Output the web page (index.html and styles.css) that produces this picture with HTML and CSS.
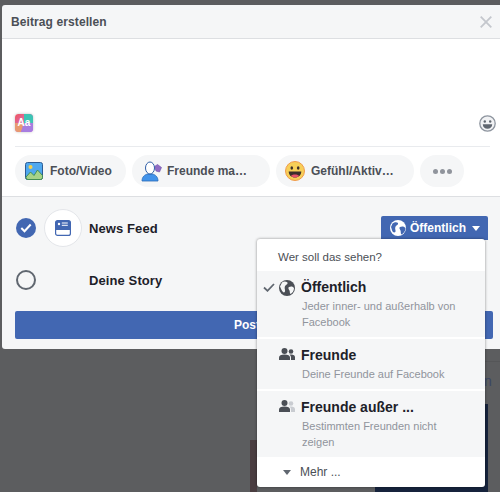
FILE: index.html
```html
<!DOCTYPE html>
<html>
<head>
<title>Beitrag erstellen</title>
<meta http-equiv="Content-Type" content="text/html; charset=utf-8" />
<link rel="stylesheet" href="styles.css">
</head>
<body>
<div class="behind behind-n">n</div>
<div class="behind behind-line"></div>
<div class="behind behind-pic"></div>
<div class="behind behind-left"></div>

<div class="dialog">
	<div class="head">
		<span class="title">Beitrag erstellen</span>
		<svg class="close" width="12" height="12" viewBox="0 0 12 12"><path d="M.7.7l10.6 10.6M11.3.7L.7 11.3" stroke="#c4c7cd" stroke-width="1.8" fill="none"/></svg>
	</div>
	<div class="compose">
		<div class="editor">
			<span class="aa">
				<svg width="18" height="18" viewBox="0 0 18 18">
					<defs>
						<linearGradient id="aa1" x1="0" y1="0" x2="1" y2="1">
							<stop offset="0" stop-color="#f0555f"/>
							<stop offset=".5" stop-color="#d86fb0"/>
							<stop offset="1" stop-color="#b33be8"/>
						</linearGradient>
					</defs>
					<rect width="18" height="18" rx="3.5" fill="url(#aa1)"/>
					<path d="M9 0h5.5A3.5 3.5 0 0 1 18 3.5V9L9 9z" fill="#3cc4b4"/>
					<path d="M0 9l9 0-3 9H3.500A3.500 3.500 0 0 1 0 14.500z" fill="#e89a70"/>
					<path d="M9 9l9 0v5.500A3.500 3.500 0 0 1 14.500 18H6z" fill="#a77de0"/>
				</svg>
				<span class="aa-text">Aa</span>
			</span>
			<svg class="smile" width="17" height="17" viewBox="0 0 17 17">
				<circle cx="8.500" cy="8.500" r="7.700" fill="#f1f2f4" stroke="#8d949e" stroke-width="1.300"/>
				<circle cx="5.800" cy="6.500" r="1.200" fill="#606770"/>
				<circle cx="11.200" cy="6.500" r="1.200" fill="#606770"/>
				<path d="M3.800 9.300h9.400c0 2.800-2 4.500-4.700 4.500s-4.700-1.700-4.700-4.500z" fill="#606770"/>
			</svg>
		</div>
		<div class="pills">
			<a class="pill pill-photo">
				<svg width="18" height="18" viewBox="0 0 18 18">
					<rect x=".5" y=".5" width="17" height="17" rx="2" fill="#4fa8ee" stroke="#2c5c94"/>
					<circle cx="5.500" cy="5" r="2" fill="#f7d04a"/>
					<path d="M1 15l4.500-5 3.500 3.500 3.500-5.500 5 5.500V15.500a2 2 0 0 1-2 2H3a2 2 0 0 1-2-2z" fill="#a6d388" stroke="#3d8b4a" stroke-width=".9"/>
				</svg>
				<span class="pill-text">Foto/Video</span>
			</a>
			<a class="pill pill-tag">
				<svg width="21" height="21" viewBox="0 0 21 21">
					<path d="M13.500 5.500l3-2 4 3-2 4.500-3.500-1z" fill="#8f6cc4" stroke="#6d4fa8" stroke-width=".6"/>
					<path d="M1 20c0-4 2.500-6.500 6-7h4c3.500.5 6 3 6 7z" fill="#4293ea" stroke="#2a6bb8" stroke-width=".8"/>
					<ellipse cx="9" cy="7" rx="4.500" ry="6" fill="#fff" stroke="#2f5fa8" stroke-width="1"/>
				</svg>
				<span class="pill-text">Freunde markieren</span>
			</a>
			<a class="pill pill-feel">
				<svg width="20" height="20" viewBox="0 0 20 20">
					<circle cx="10" cy="10" r="9.500" fill="#f7cf58" stroke="#f09a4a"/>
					<ellipse cx="6.800" cy="7" rx="1.300" ry="1.700" fill="#3c2f2a"/>
					<ellipse cx="13.200" cy="7" rx="1.300" ry="1.700" fill="#3c2f2a"/>
					<path d="M3.700 10.500h12.600c0 3.700-2.800 6-6.300 6s-6.300-2.300-6.300-6z" fill="#3c2f2a"/>
					<path d="M6 14.700c1-.9 2.500-1.200 4-1.200s3 .3 4 1.200c-1 1.200-2.400 1.800-4 1.800s-3-.6-4-1.800z" fill="#e8536a"/>
				</svg>
				<span class="pill-text">Gefühl/Aktivität</span>
			</a>
			<a class="pill pill-more">
				<span class="dot"></span><span class="dot"></span><span class="dot"></span>
			</a>
		</div>
	</div>
	<div class="share">
		<div class="row">
			<span class="radio radio-on">
				<svg width="12" height="10" viewBox="0 0 12 10"><path d="M1.300 5l3.200 3.200 6.200-6.700" stroke="#fff" stroke-width="2" fill="none"/></svg>
			</span>
			<span class="avatar">
				<svg width="16" height="16" viewBox="0 0 16 16">
					<rect x=".6" y=".6" width="14.800" height="14.800" rx="2" fill="#fff" stroke="#4267b2" stroke-width="1.200"/>
					<path d="M.6 10V2.600a2 2 0 0 1 2-2h10.800a2 2 0 0 1 2 2V10z" fill="#4267b2"/>
					<circle cx="4" cy="4" r="1.200" fill="#fff"/>
					<path d="M6.800 3h6M6.800 5.300h6" stroke="#fff" stroke-width="1"/>
				</svg>
			</span>
			<span class="row-label">News Feed</span>
			<a class="audience">
				<svg width="16" height="16" viewBox="0 0 16 16">
					<circle cx="8" cy="8" r="8" fill="#fff"/>
					<path d="M2.500 3.500C5 1.500 7 2 8 3c.5 1.500-1 2-2 3S5 8.500 5.500 10.500 4 13 3 12 1.500 8 1 7zM10 7c2-1 4.500-.5 5.500 1 0 3-2 5.500-4 6.500-1-1-.5-2.500-1-4S8.500 8 10 7z" fill="#4267b2"/>
				</svg>
				<span class="audience-text">Öffentlich</span>
				<span class="arrow arrow-white"></span>
			</a>
		</div>
		<div class="row row-story">
			<span class="radio"></span>
			<span class="avatar avatar-empty"></span>
			<span class="row-label">Deine Story</span>
		</div>
		<a class="post">Posten</a>
	</div>
</div>

<div class="menu">
	<div class="menu-head">Wer soll das sehen?</div>
	<div class="option option-public">
		<svg class="tick" width="12" height="9" viewBox="0 0 12 9"><path d="M1 4.500l3.500 3.300L11 1" stroke="#606770" stroke-width="1.800" fill="none"/></svg>
		<svg class="opt-icon" width="16" height="16" viewBox="0 0 16 16">
			<circle cx="8" cy="8" r="8" fill="#4b4f56"/>
			<path d="M3 2.500C5 1 7 1.500 8.500 2.500c.5 1.500-1 2-2 3S5.500 8 6 10s-1 3-2 2S1.500 8 1 6.500zM10 7c2-1 4.200-.5 5 1 0 3-1.500 5-3.500 6-1-1-.5-2.500-1-3.500S8.500 8 10 7z" fill="#f5f6f7"/>
		</svg>
		<div class="opt-title">Öffentlich</div>
		<div class="opt-desc">Jeder inner- und außerhalb von Facebook</div>
	</div>
	<div class="option">
		<svg class="opt-icon" width="16" height="12" viewBox="0 0 16 12">
			<circle cx="5.500" cy="3" r="3" fill="#4b4f56"/>
			<path d="M0 12V9.500C0 7.500 2 6.500 5.500 6.500s5.500 1 5.500 3V12z" fill="#4b4f56"/>
			<circle cx="12" cy="3.500" r="2.300" fill="#4b4f56"/>
			<path d="M12 12V9.500c0-1.200-.5-2.200-1.500-2.800.5-.1 1-.2 1.700-.2 2.400 0 3.800 1 3.800 2.700V12z" fill="#4b4f56"/>
		</svg>
		<div class="opt-title">Freunde</div>
		<div class="opt-desc">Deine Freunde auf Facebook</div>
	</div>
	<div class="option">
		<svg class="opt-icon" width="16" height="12" viewBox="0 0 16 12">
			<circle cx="5.500" cy="3" r="3" fill="#4b4f56"/>
			<path d="M0 12V9.500C0 7.500 2 6.500 5.500 6.500s5.500 1 5.500 3V12z" fill="#4b4f56"/>
			<circle cx="12" cy="3.500" r="2.300" fill="#c9ccd1"/>
			<path d="M12 12V9.500c0-1.200-.5-2.200-1.500-2.800.5-.1 1-.2 1.700-.2 2.400 0 3.800 1 3.800 2.700V12z" fill="#c9ccd1"/>
		</svg>
		<div class="opt-title">Freunde außer ...</div>
		<div class="opt-desc">Bestimmten Freunden nicht zeigen</div>
	</div>
	<div class="menu-more">
		<span class="arrow arrow-grey"></span>
		<span>Mehr ...</span>
	</div>
</div>
</body>
</html>
```

FILE: styles.css
```css
* {margin:0;padding:0;box-sizing:border-box;}
html,body {height:100%;overflow:hidden;}
body {background:#5c5d5f;font-family:"Liberation Sans",Arial,sans-serif;padding:5px 0 0 2px;}
a {display:flex;align-items:center;}

.behind {position:absolute;}
.behind-n {left:484px;top:373px;color:#3a4664;font-size:14px;}
.behind-line {left:485px;top:361px;width:15px;height:1px;background:#555658;}
.behind-pic {left:375px;top:404px;width:113px;height:88px;background:#16233c;}
.behind-left {left:250px;top:440px;width:7px;height:52px;background:#4a3d40;}

.dialog {position:relative;width:498px;height:344px;background:#f5f6f7;border-radius:3px 0 0 3px;display:flex;flex-direction:column;}
.head {height:34px;flex:none;display:flex;align-items:center;justify-content:space-between;padding:0 8px 0 9px;border-bottom:1px solid #dddfe2;}
.title {font-size:12px;font-weight:700;color:#4b4f56;letter-spacing:.1px;}

.compose {height:158px;flex:none;background:#fff;padding:0 10px 0 13px;border-bottom:1px solid #dddfe2;display:flex;flex-direction:column;}
.editor {height:108px;flex:none;border-bottom:1px solid #e9ebee;margin-right:0;display:flex;align-items:flex-end;justify-content:space-between;padding-bottom:14px;margin-right:0;}
.aa {position:relative;display:block;width:18px;height:18px;border-radius:3.5px;box-shadow:0 0 3px rgba(0,0,0,.25);}
.aa svg {display:block;}
.aa-text {position:absolute;left:0;right:0;top:3px;text-align:center;color:#fff;font-size:10px;font-weight:700;line-height:12px;}
.smile {margin-right:-6px;}

.pills {display:flex;gap:6px;padding-top:8px;margin-right:-6px;}
.pill {height:32px;border-radius:16px;background:#f5f6f7;font-size:12px;font-weight:700;color:#4b4f56;}
.pill-text {overflow:hidden;white-space:nowrap;text-overflow:ellipsis;}
.pill-photo {width:111px;padding-left:10px;gap:7px;}
.pill-tag {width:138px;padding-left:9px;gap:5px;}
.pill-tag .pill-text {width:84px;}
.pill-feel {width:138px;padding-left:9px;gap:6px;}
.pill-feel .pill-text {width:84px;}
.pill-more {width:44px;justify-content:center;gap:2px;}
.dot {width:5px;height:5px;border-radius:50%;background:#90949c;}

.share {flex:1;padding:0 7px 0 13px;display:flex;flex-direction:column;}
.row {height:38px;margin-top:12px;display:flex;align-items:center;}
.row-story {margin-top:14px;}
.radio {width:20px;height:20px;flex:none;border-radius:50%;border:2px solid #606770;margin-left:1px;display:flex;align-items:center;justify-content:center;}
.radio-on {background:#4267b2;border:0;}
.avatar {width:38px;height:38px;flex:none;border-radius:50%;background:#fff;border:1px solid #e4e6ea;margin-left:8px;display:flex;align-items:center;justify-content:center;}
.avatar-empty {background:none;border:0;}
.row-label {font-size:13px;font-weight:700;color:#1d2129;margin-left:7px;letter-spacing:.1px;}
.audience {margin-left:auto;margin-right:5px;width:107px;height:24px;background:#4267b2;border-radius:2px 2px 0 0;padding-left:9px;color:#fff;font-size:12px;font-weight:700;}
.audience-text {margin-left:4px;}
.arrow {display:block;width:0;height:0;border-style:solid;border-width:5px 4.500px 0;}
.arrow-white {border-color:#fff transparent transparent;margin-left:6px;}
.arrow-grey {border-color:#606770 transparent transparent;}
.post {height:28px;margin-top:12px;background:#4267b2;border-radius:2px;color:#fff;font-size:12px;font-weight:700;justify-content:center;margin-right:0;}

.menu {position:absolute;left:257px;top:239px;width:228px;height:248px;background:#fff;border-radius:3px;box-shadow:0 0 3px rgba(0,0,0,.45);overflow:hidden;}
.menu-head {height:32px;padding:11px 0 0 21px;font-size:11.500px;line-height:14px;color:#4b4f56;}
.option {position:relative;background:#f5f6f7;padding:7px 20px 7px 44px;margin-bottom:2px;}
.option-public {margin-bottom:2px;}
.opt-title {font-size:14px;font-weight:700;line-height:18px;color:#1d2129;}
.opt-desc {font-size:11px;line-height:16px;color:#90949c;margin-top:2px;padding-left:1px;}
.opt-icon {position:absolute;left:22px;top:9px;}
.tick {position:absolute;left:6px;top:12px;}
.menu-more {height:30px;display:flex;align-items:center;gap:9px;padding-left:26px;font-size:12px;color:#4b4f56;margin-top:-2px;}
```
